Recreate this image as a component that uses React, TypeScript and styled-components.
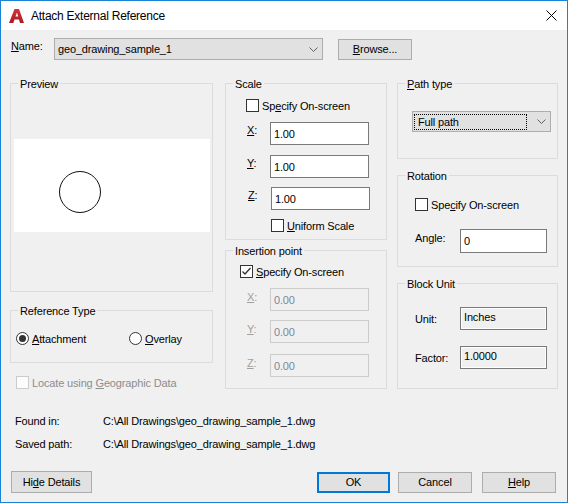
import styled, { createGlobalStyle } from "styled-components";

const GlobalStyle = createGlobalStyle`
    html, body {
        margin: 0;
        padding: 0;
        background: #f0f0f0;
    }
    * {
        box-sizing: border-box;
    }
`;

const Window = styled.div`
    width: 568px;
    height: 503px;
    border: 1px solid #1883d7;
    background: #f0f0f0;
    display: flex;
    flex-direction: column;
    font-family: "Liberation Sans", Arial, sans-serif;
    font-size: 11px;
    letter-spacing: -0.15px;
    color: #000;
    overflow: hidden;
`;

const TitleBar = styled.div`
    height: 29px;
    flex-shrink: 0;
    background: #fff;
    display: flex;
    align-items: center;
    padding: 0 10px 0 7px;
`;

const TitleText = styled.span`
    margin-left: 6px;
    font-size: 12px;
    letter-spacing: -0.25px;
`;

const CloseButton = styled.div`
    margin-left: auto;
    display: flex;
    align-items: center;
`;

const Content = styled.div`
    flex: 1;
    display: flex;
    flex-direction: column;
    padding: 8px 9px 0 9px;
`;

const NameRow = styled.div`
    display: flex;
    align-items: center;
    height: 22px;
`;

const NameLabel = styled.span`
    width: 44px;
    padding-left: 1px;
    margin-top: -6px;
`;

const Combo = styled.div<{ $w: number; $h: number }>`
    width: ${(p) => p.$w}px;
    height: ${(p) => p.$h}px;
    background: #e1e1e1;
    border: 1px solid #adadad;
    display: flex;
    align-items: center;
    padding: 0 4px 0 0;
    justify-content: space-between;
`;

const ComboText = styled.span<{ $focus?: boolean }>`
    flex: 1;
    padding: 1px ${(p) => (p.$focus ? "3px" : "1px")};
    margin: 0 10px 0 1px;
    border: 1px dotted ${(p) => (p.$focus ? "#000" : "transparent")};
`;

const Button = styled.div<{ $w: number; $h?: number; $primary?: boolean }>`
    width: ${(p) => p.$w}px;
    height: ${(p) => p.$h ?? 21}px;
    background: #e1e1e1;
    border: ${(p) => (p.$primary ? "2px solid #0078d7" : "1px solid #adadad")};
    display: flex;
    align-items: center;
    justify-content: center;
`;

const Columns = styled.div`
    display: flex;
    align-items: flex-start;
    margin-top: 23px;
`;

const Column = styled.div<{ $w: number; $mr?: number }>`
    width: ${(p) => p.$w}px;
    margin-right: ${(p) => p.$mr ?? 0}px;
    display: flex;
    flex-direction: column;
`;

const Group = styled.div<{ $h: number; $mt?: number; $pad?: string }>`
    position: relative;
    height: ${(p) => p.$h}px;
    margin-top: ${(p) => p.$mt ?? 0}px;
    border: 1px solid #dcdcdc;
    padding: ${(p) => p.$pad ?? "0"};
    display: flex;
    flex-direction: column;
    align-items: flex-start;
`;

const Legend = styled.span`
    position: absolute;
    top: -6px;
    left: 7px;
    padding: 0 2px;
    line-height: 13px;
    background: #f0f0f0;
`;

const PreviewArea = styled.div`
    width: 196px;
    height: 93px;
    margin-left: 3px;
    background: #fff;
`;

const CheckRow = styled.div<{ $mt?: number; $ml?: number; $disabled?: boolean }>`
    display: flex;
    align-items: center;
    height: 13px;
    margin-top: ${(p) => p.$mt ?? 0}px;
    margin-left: ${(p) => p.$ml ?? 0}px;
    color: ${(p) => (p.$disabled ? "#8d8d8d" : "#000")};
`;

const Box = styled.span<{ $disabled?: boolean }>`
    width: 13px;
    height: 13px;
    flex-shrink: 0;
    border: 1px solid ${(p) => (p.$disabled ? "#cccccc" : "#333")};
    background: ${(p) => (p.$disabled ? "#fcfcfc" : "#fff")};
    margin-right: 3px;
    display: flex;
    align-items: center;
    justify-content: center;
`;

const Radio = styled.span<{ $on?: boolean }>`
    width: 13px;
    height: 13px;
    flex-shrink: 0;
    border-radius: 50%;
    border: 1px solid #333;
    background: #fff;
    margin-right: 3px;
    display: flex;
    align-items: center;
    justify-content: center;
    &::after {
        content: "";
        width: 7px;
        height: 7px;
        border-radius: 50%;
        background: ${(p) => (p.$on ? "#333" : "transparent")};
    }
`;

const RadioOption = styled.div<{ $w?: number }>`
    display: flex;
    align-items: center;
    width: ${(p) => (p.$w ? `${p.$w}px` : "auto")};
`;

const RadioRow = styled.div`
    display: flex;
    align-items: center;
`;

const FieldRow = styled.div<{ $mt?: number; $ml?: number }>`
    display: flex;
    align-items: center;
    margin-top: ${(p) => p.$mt ?? 0}px;
    margin-left: ${(p) => p.$ml ?? 0}px;
`;

const FieldLabel = styled.span<{ $w: number; $pl?: number; $dy?: number; $disabled?: boolean }>`
    width: ${(p) => p.$w}px;
    padding-left: ${(p) => p.$pl ?? 0}px;
    position: relative;
    top: ${(p) => p.$dy ?? 0}px;
    color: ${(p) => (p.$disabled ? "#a0a0a0" : "#000")};
`;

const TextBox = styled.div<{ $w: number; $h?: number; $disabled?: boolean }>`
    width: ${(p) => p.$w}px;
    height: ${(p) => p.$h ?? 23}px;
    background: ${(p) => (p.$disabled ? "#f0f0f0" : "#fff")};
    border: 1px solid ${(p) => (p.$disabled ? "#cccccc" : "#7a7a7a")};
    color: ${(p) => (p.$disabled ? "#7d8796" : "#000")};
    display: flex;
    align-items: center;
    padding-left: 3px;
`;

const ReadOnlyBox = styled.div<{ $w: number }>`
    width: ${(p) => p.$w}px;
    height: 23px;
    background: #f0f0f0;
    border: 1px solid #7a7a7a;
    box-shadow: inset 0 0 0 1px #fff;
    padding: 3px 0 0 3px;
`;

const Info = styled.div`
    margin-top: 20px;
    padding-left: 5px;
    display: flex;
    flex-direction: column;
`;

const InfoLine = styled.div`
    display: flex;
    align-items: center;
    height: 23px;
`;

const InfoLabel = styled.span`
    width: 88px;
`;

const ButtonRow = styled.div`
    display: flex;
    align-items: center;
    margin-top: 16px;
    padding-left: 1px;
    padding-right: 2px;
`;

const ButtonGroup = styled.div`
    margin-left: auto;
    display: flex;
    align-items: center;
`;

const U = styled.span`
    text-decoration: underline;
`;

const Chevron = () => (
    <svg width="9" height="5" viewBox="0 0 9 5">
        <polyline points="0.5,0.5 4.5,4.5 8.5,0.5" fill="none" stroke="#606060" strokeWidth="1" />
    </svg>
);

const Check = ({ checked, disabled, children, mt, ml }: {
    checked?: boolean; disabled?: boolean; children: React.ReactNode; mt?: number; ml?: number;
}) => (
    <CheckRow $mt={mt} $ml={ml} $disabled={disabled}>
        <Box $disabled={disabled}>
            {checked && (
                <svg width="11" height="11" viewBox="0 0 11 11">
                    <polyline points="1.5,5.5 4,8 9.5,2" fill="none" stroke="#333" strokeWidth="1.3" />
                </svg>
            )}
        </Box>
        <span>{children}</span>
    </CheckRow>
);

const AppLogo = () => (
    <svg width="17" height="16" viewBox="0 0 17 16">
        <defs>
            <linearGradient id="lg" x1="0" y1="0" x2="0" y2="1">
                <stop offset="0" stopColor="#d6323a" />
                <stop offset="1" stopColor="#a81d25" />
            </linearGradient>
        </defs>
        <path
            d="M1 15 L6.5 1 L11 1 L16 15 L12 15 L11 11.5 L6.5 11.5 L5.3 15 Z M7.5 8.5 L10.2 8.5 L9 4.5 Z"
            fill="url(#lg)"
            fillRule="evenodd"
        />
    </svg>
);

const App = () => {
    return (
        <>
            <GlobalStyle />
            <Window>
                <TitleBar>
                    <AppLogo />
                    <TitleText>Attach External Reference</TitleText>
                    <CloseButton>
                        <svg width="11" height="11" viewBox="0 0 11 11">
                            <path d="M0.5 0.5 L10.5 10.5 M10.5 0.5 L0.5 10.5" stroke="#000" strokeWidth="1" />
                        </svg>
                    </CloseButton>
                </TitleBar>
                <Content>
                    <NameRow>
                        <NameLabel><U>N</U>ame:</NameLabel>
                        <Combo $w={269} $h={22}>
                            <ComboText>geo_drawing_sample_1</ComboText>
                            <Chevron />
                        </Combo>
                        <Button $w={74} style={{ marginLeft: 15 }}><U>B</U>rowse...</Button>
                    </NameRow>

                    <Columns>
                        <Column $w={203} $mr={12}>
                            <Group $h={209} $pad="55px 0 0 0">
                                <Legend>Preview</Legend>
                                <PreviewArea>
                                    <svg width="196" height="93" viewBox="0 0 196 93">
                                        <circle cx="66" cy="53" r="20.5" fill="none" stroke="#111" strokeWidth="1" />
                                    </svg>
                                </PreviewArea>
                            </Group>
                            <Group $h={53} $mt={18} $pad="21px 0 0 5px">
                                <Legend>Reference Type</Legend>
                                <RadioRow>
                                    <RadioOption $w={113}>
                                        <Radio $on />
                                        <span><U>A</U>ttachment</span>
                                    </RadioOption>
                                    <RadioOption>
                                        <Radio />
                                        <span><U>O</U>verlay</span>
                                    </RadioOption>
                                </RadioRow>
                            </Group>
                            <Check disabled mt={13} ml={6}>
                                Locate using <U>G</U>eographic Data
                            </Check>
                        </Column>

                        <Column $w={162} $mr={10}>
                            <Group $h={157} $pad="15px 0 0 20px">
                                <Legend>Scale</Legend>
                                <Check>Sp<U>e</U>cify On-screen</Check>
                                <FieldRow $mt={10}>
                                    <FieldLabel $w={24} $pl={1} $dy={-4}><U>X</U>:</FieldLabel>
                                    <TextBox $w={99}>1.00</TextBox>
                                </FieldRow>
                                <FieldRow $mt={10}>
                                    <FieldLabel $w={24} $pl={1} $dy={-4}><U>Y</U>:</FieldLabel>
                                    <TextBox $w={99}>1.00</TextBox>
                                </FieldRow>
                                <FieldRow $mt={9}>
                                    <FieldLabel $w={25} $pl={2} $dy={-4}><U>Z</U>:</FieldLabel>
                                    <TextBox $w={99}>1.00</TextBox>
                                </FieldRow>
                                <Check mt={9} ml={25}><U>U</U>niform Scale</Check>
                            </Group>
                            <Group $h={139} $mt={10} $pad="14px 0 0 14px">
                                <Legend>Insertion point</Legend>
                                <Check checked><U>S</U>pecify On-screen</Check>
                                <FieldRow $mt={10}>
                                    <FieldLabel $w={30} $pl={7} $dy={-3} $disabled><U>X</U>:</FieldLabel>
                                    <TextBox $w={99} $disabled>0.00</TextBox>
                                </FieldRow>
                                <FieldRow $mt={9}>
                                    <FieldLabel $w={30} $pl={7} $dy={-3} $disabled><U>Y</U>:</FieldLabel>
                                    <TextBox $w={99} $disabled>0.00</TextBox>
                                </FieldRow>
                                <FieldRow $mt={11}>
                                    <FieldLabel $w={30} $pl={7} $dy={-3} $disabled><U>Z</U>:</FieldLabel>
                                    <TextBox $w={99} $disabled>0.00</TextBox>
                                </FieldRow>
                            </Group>
                        </Column>

                        <Column $w={161}>
                            <Group $h={76} $pad="27px 0 0 14px">
                                <Legend><U>P</U>ath type</Legend>
                                <Combo $w={139} $h={21}>
                                    <ComboText $focus>Full path</ComboText>
                                    <Chevron />
                                </Combo>
                            </Group>
                            <Group $h={92} $mt={16} $pad="22px 0 0 17px">
                                <Legend>Rotation</Legend>
                                <Check>Spe<U>c</U>ify On-screen</Check>
                                <FieldRow $mt={18}>
                                    <FieldLabel $w={45} $dy={-3}>An<U>g</U>le:</FieldLabel>
                                    <TextBox $w={87} $h={24}>0</TextBox>
                                </FieldRow>
                            </Group>
                            <Group $h={106} $mt={16} $pad="23px 0 0 17px">
                                <Legend>Block Unit</Legend>
                                <FieldRow>
                                    <FieldLabel $w={45}>Unit:</FieldLabel>
                                    <ReadOnlyBox $w={87}>Inches</ReadOnlyBox>
                                </FieldRow>
                                <FieldRow $mt={16}>
                                    <FieldLabel $w={45}>Factor:</FieldLabel>
                                    <ReadOnlyBox $w={87}>1.0000</ReadOnlyBox>
                                </FieldRow>
                            </Group>
                        </Column>
                    </Columns>

                    <Info>
                        <InfoLine>
                            <InfoLabel>Found in:</InfoLabel>
                            <span>C:\All Drawings\geo_drawing_sample_1.dwg</span>
                        </InfoLine>
                        <InfoLine>
                            <InfoLabel>Saved path:</InfoLabel>
                            <span>C:\All Drawings\geo_drawing_sample_1.dwg</span>
                        </InfoLine>
                    </Info>

                    <ButtonRow>
                        <Button $w={81} $h={22}>Hi<U>d</U>e Details</Button>
                        <ButtonGroup>
                            <Button $w={73} $primary>OK</Button>
                            <Button $w={74} style={{ marginLeft: 8 }}>Cancel</Button>
                            <Button $w={74} style={{ marginLeft: 10 }}><U>H</U>elp</Button>
                        </ButtonGroup>
                    </ButtonRow>
                </Content>
            </Window>
        </>
    );
};

export default App;
